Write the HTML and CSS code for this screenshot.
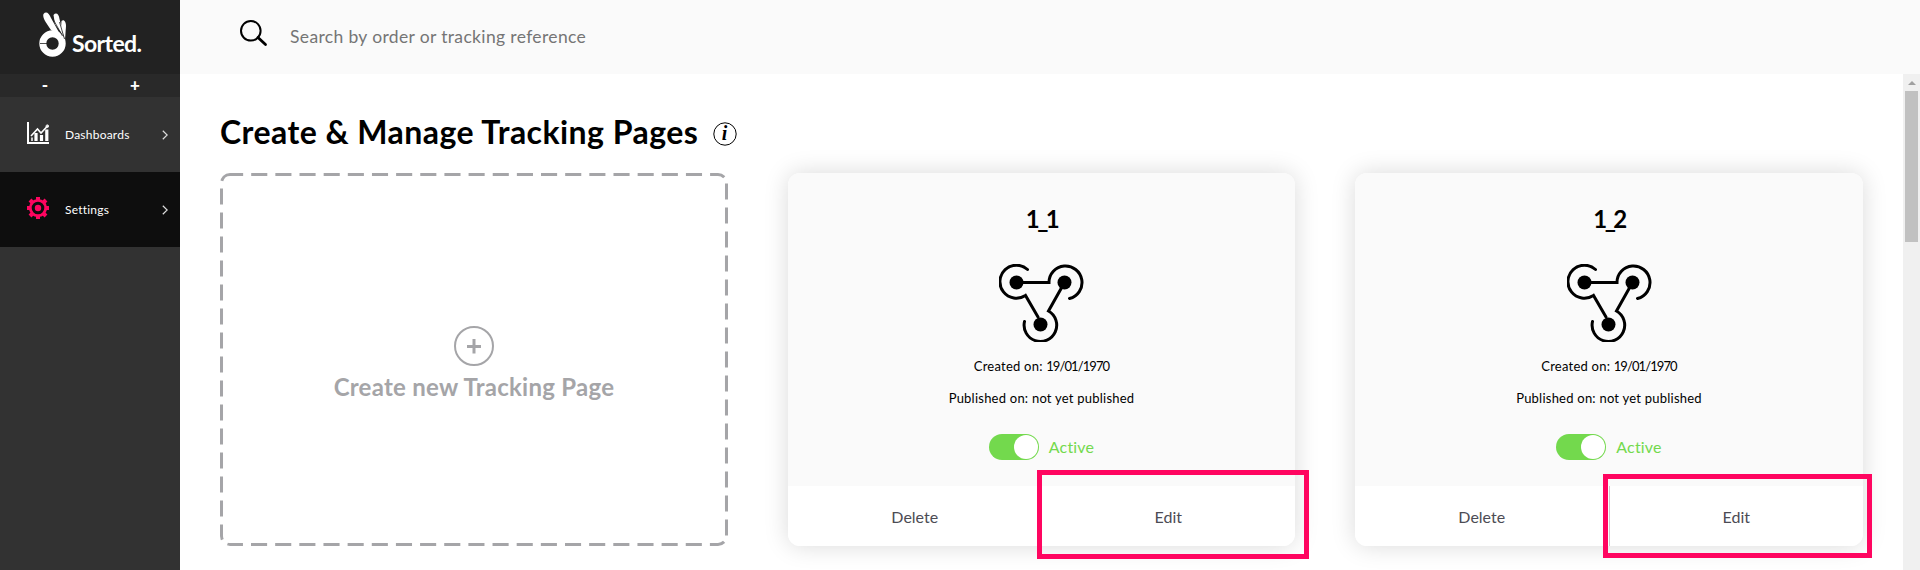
FILE: index.html
```
<!DOCTYPE html>
<html lang="en">
<head>
<meta charset="utf-8">
<title>Create &amp; Manage Tracking Pages</title>
<link rel="stylesheet" href="styles.css">
</head>
<body>
<svg class="defs" width="0" height="0">
  <symbol id="webhook" viewBox="0 0 86 78">
    <g fill="none" stroke="#000" stroke-width="3" stroke-linecap="round">
      <path d="M28.500 5.500A16.500 16.500 0 1 0 26.500 31.500L39 53"/>
      <path d="M17.500 18.500H50A16.500 16.500 0 1 1 70.500 34.500"/>
      <path d="M65.500 18.500L49.500 47A16.300 16.300 0 1 1 25.500 57.500"/>
    </g>
    <circle cx="17.500" cy="18.500" r="7"/><circle cx="65.500" cy="18.500" r="7"/><circle cx="41.500" cy="60.500" r="7"/>
  </symbol>
</svg>
<div class="app">
  <aside class="sidebar">
    <div class="brand">
      <svg class="brand-mark" width="28" height="46" viewBox="0 0 28 46">
        <circle cx="13.500" cy="31.500" r="9.700" fill="none" stroke="#fff" stroke-width="7"/>
        <path d="M4.500 2C7 -1 10 1 12 6L22 24L12 18C8 12 3 6 4.500 2Z" fill="#fff"/>
        <path d="M14.500 3C17 0 20 2 20.500 7L24.500 24L16 12Z" fill="#fff"/>
        <path d="M22.500 9C25 7 27 10 27 14L26 28L22 16Z" fill="#fff"/>
        <path d="M14 7L23.500 24M20.500 10L25.500 27M1 31.500H8" stroke="#222" stroke-width=".8" fill="none"/>
      </svg>
      <span class="brand-name">Sorted.</span>
    </div>
    <div class="sizer"><span>-</span><span>+</span></div>
    <nav>
      <a class="nav-item">
        <svg class="nav-icon" width="22" height="22" viewBox="0 0 22 22" fill="none" stroke="#fff">
          <path d="M1 0V21H22" stroke-width="2"/>
          <path d="M9 11V19M14.500 13V19M19.800 7.500V19" stroke-width="3.200"/><path d="M5 15.500V19" stroke-width="1.500"/>
          <path d="M4 14L10.500 7L14 11L21 3.500" stroke-width="1.600"/><circle cx="20.300" cy="4.200" r="1.300"/>
        </svg>
        <span class="nav-label">Dashboards</span>
        <svg class="chev" width="6" height="10" viewBox="0 0 6 10"><path d="M.8 .7L5.200 5L.8 9.300"/></svg>
      </a>
      <a class="nav-item active">
        <svg class="nav-icon" width="22" height="22" viewBox="0 0 22 22">
          <g fill="none" stroke="#ff0560"><circle cx="11" cy="11" r="7.700" stroke-width="2.800"/>
          <path stroke-width="4" d="M11 0V3.500M11 18.500V22M0 11H3.500M18.500 11H22M3 3L5.500 5.500M16.500 16.500L19 19M3 19L5.500 16.500M16.500 5.500L19 3"/></g>
          <circle cx="11" cy="11" r="3.200" fill="#ff0560"/>
        </svg>
        <span class="nav-label">Settings</span>
        <svg class="chev" width="6" height="10" viewBox="0 0 6 10"><path d="M.8 .7L5.200 5L.8 9.300"/></svg>
      </a>
    </nav>
  </aside>
  <div class="main">
    <header class="topbar">
      <svg width="28" height="28" viewBox="0 0 28 28" fill="none" stroke="#000"><circle cx="10.800" cy="10.800" r="9.800" stroke-width="2"/><path d="M18 17.500L25.500 24.500" stroke-width="2.800" stroke-linecap="round"/></svg>
      <span class="placeholder">Search by order or tracking reference</span>
    </header>
    <div class="body">
      <main class="content">
        <div class="title-row">
          <h1>Create &amp; Manage Tracking Pages</h1>
          <svg class="info" width="24" height="24" viewBox="0 0 24 24"><circle cx="12" cy="12" r="11.200" fill="none" stroke="#000"/><text x="11.500" y="17.500" text-anchor="middle">i</text></svg>
        </div>
        <div class="cards">
          <section class="new-card">
            <svg class="dashes" viewBox="0 0 504.800 373" preserveAspectRatio="none"><rect width="504.800" height="373" rx="10"/></svg>
            <svg width="40" height="40" viewBox="0 0 40 40" fill="none" stroke="#a5a5a8"><circle cx="20" cy="20" r="19" stroke-width="2"/><path d="M20 13V27.500M13 20.500H27" stroke-width="3"/></svg>
            <span class="new-label">Create new Tracking Page</span>
          </section>
          <section class="card">
            <div class="card-top">
              <h2>1_1</h2>
              <svg class="hook" width="86" height="78"><use href="#webhook"/></svg>
              <p>Created on: <span class="date">19/01/1970</span></p>
              <p>Published on: not yet published</p>
              <div class="status"><span class="toggle"></span><span class="state">Active</span></div>
            </div>
            <div class="actions"><span>Delete</span><span>Edit</span></div>
            <div class="highlight first"></div>
          </section>
          <section class="card">
            <div class="card-top">
              <h2>1_2</h2>
              <svg class="hook" width="86" height="78"><use href="#webhook"/></svg>
              <p>Created on: <span class="date">19/01/1970</span></p>
              <p>Published on: not yet published</p>
              <div class="status"><span class="toggle"></span><span class="state">Active</span></div>
            </div>
            <div class="actions divided"><span>Delete</span><span>Edit</span></div>
            <div class="highlight second"></div>
          </section>
        </div>
      </main>
      <div class="scrollbar"><span class="arrow"></span><span class="thumb"></span></div>
    </div>
  </div>
</div>
</body>
</html>
```
FILE: styles.css
```
* { box-sizing: border-box; }
body { margin: 0; font-family: Lato, "Liberation Sans", sans-serif; color: #000; background: #fff; }
h1, h2, p { margin: 0; }
.defs { position: absolute; }
.app { display: flex; height: 570px; overflow: hidden; }
.sidebar { width: 180px; background: #323232; color: #fff; }
.brand { height: 74px; background: #222; display: flex; padding: 12px 0 0 39px; }
.brand-name { font-size: 23px; font-weight: 700; line-height: 28px; margin: 17px 0 0 5px; letter-spacing: -.6px; }
.sizer { height: 23px; background: #292929; display: flex; font-size: 17px; font-weight: 900; line-height: 22px; text-align: center; }
.sizer span { flex: 1; }
.nav-item { height: 75px; display: flex; align-items: center; padding: 0 12px 0 27px; }
.active { background: #0e0e0e; }
.nav-icon { margin-top: -4px; }
.nav-label { font-size: 12px; margin-left: 16px; flex: 1; letter-spacing: .22px; }
.chev { fill: none; stroke: #ddd; stroke-width: 1.2; }
.main { flex: 1; min-width: 0; display: flex; flex-direction: column; }
.topbar { height: 74px; background: #fafafa; display: flex; padding: 20px 0 0 60px; }
.placeholder { color: #757575; font-size: 17.5px; line-height: 22px; margin: 6px 0 0 22px; letter-spacing: .35px; }
.body { flex: 1; display: flex; min-height: 0; }
.content { flex: 1; padding: 36px 40px 0; }
.title-row { display: flex; height: 63px; }
h1 { font-size: 32px; line-height: 44px; font-weight: 700; letter-spacing: .45px; white-space: nowrap; width: 477px; }
.info { margin: 12px 0 0 16px; }
.info text { font: italic 700 20px "Liberation Serif", serif; }
.cards { display: grid; grid-template-columns: 508px 507px 508px; column-gap: 60px; height: 373px; }
.new-card { position: relative; display: flex; flex-direction: column; align-items: center; padding-top: 153px; border-radius: 10px; overflow: hidden; color: #a5a5a8; }
.dashes { position: absolute; left: 0; top: 0; width: 508px; height: 373px; fill: none; stroke: #a5a5a8; stroke-width: 6; stroke-dasharray: 16 8; stroke-dashoffset: 3; }
.new-label { font-size: 24px; line-height: 30px; margin-top: 6px; font-weight: 700; letter-spacing: .27px; }
.card { position: relative; border-radius: 12px; box-shadow: 0 0 24px rgba(0,0,0,.15); }
.card-top { height: 313px; background: #fafafa; border-radius: 12px 12px 0 0; display: flex; flex-direction: column; align-items: center; padding-top: 30px; }
h2 { font-size: 24px; line-height: 32px; font-weight: 700; letter-spacing: -2.5px; }
.hook { margin: 29px 0 15px 1px; }
.card p { font-size: 13px; line-height: 18px; margin-bottom: 14px; letter-spacing: .23px; }
.card .date { letter-spacing: -.9px; }
.status { display: flex; align-items: center; gap: 10px; margin-top: 13px; color: #73d94d; font-size: 16px; }
.state { margin-top: -2px; letter-spacing: .2px; }
.toggle { width: 50px; height: 26px; border-radius: 13px; background: #73d94d; display: flex; justify-content: flex-end; padding: 1px; }
.toggle::after { content: ""; width: 24px; height: 24px; border-radius: 50%; background: #fff; }
.actions { height: 60px; background: #fff; border-radius: 0 0 12px 12px; display: flex; font-size: 16px; line-height: 61px; color: #4c4c54; text-align: center; }
.actions span { flex: 1; }
.divided span + span { border-left: 1px solid #ccc; }
.highlight { position: absolute; border: 5px solid #ff0560; }
.first { left: 249px; top: 297px; width: 272px; height: 89px; }
.second { left: 248px; top: 301px; width: 269px; height: 84px; }
.scrollbar { width: 17px; background: #f0f0f0; display: flex; flex-direction: column; align-items: center; }
.arrow { margin: 7px 0 6px; border: 4px solid transparent; border-top: 0; border-bottom-color: #a0a0a0; }
.thumb { width: 13px; height: 151px; background: #c1c1c1; }
```
